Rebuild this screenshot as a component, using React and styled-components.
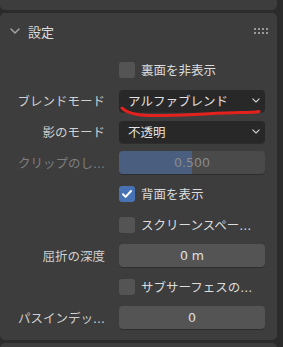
import React from "react";
import styled, { createGlobalStyle } from "styled-components";

const Global = createGlobalStyle`
  html, body {
    margin: 0;
    background: #2b2b2b;
  }
  body {
    font-family: "DejaVu Sans", "Noto Sans CJK JP", sans-serif;
    font-size: 12.5px;
    color: #d4d4d4;
  }
`;

const Page = styled.div`
  width: 283px;
  height: 347px;
  overflow: hidden;
  display: flex;
  flex-direction: column;
  gap: 3px;
`;

const TopPanel = styled.div`
  height: 10px;
  flex: none;
  margin-right: 6px;
  background: #3d3d3d;
  border-radius: 0 0 5px 5px;
  overflow: hidden;
  display: flex;
  align-items: flex-end;
  padding-left: 26px;
  color: #d4d4d4;
  line-height: 1;
`;

const TopTitle = styled.span`
  margin-bottom: 9px;
`;

const Panel = styled.section`
  flex: none;
  margin-right: 6px;
  background: #3d3d3d;
  border-radius: 5px;
  padding: 0 12px 7px 0;
`;

const NextPanel = styled.div`
  height: 20px;
  flex: none;
  margin-right: 6px;
  background: #3d3d3d;
  border-radius: 5px 5px 0 0;
`;

const Header = styled.div`
  height: 36px;
  display: flex;
  align-items: center;
  padding-left: 10px;
  gap: 8px;
  color: #dcdcdc;
`;

const Title = styled.span`
  flex: 1;
  font-size: 13px;
`;

const Grip = styled.div`
  display: grid;
  grid-template-columns: repeat(4, 2px);
  grid-template-rows: repeat(2, 2px);
  gap: 2px 2px;
  margin-right: -3px;
  span {
    background: #9a9a9a;
  }
`;

const Body = styled.div`
  padding-top: 5px;
  display: flex;
  flex-direction: column;
`;

const Row = styled.div`
  height: 31px;
  display: grid;
  grid-template-columns: 105px 1fr;
  column-gap: 14px;
  align-items: center;
`;

const Label = styled.span`
  text-align: right;
  white-space: nowrap;
  color: ${(p) => (p.$dim ? "#7e7e7e" : "#d0d0d0")};
`;

const Control = styled.div`
  position: relative;
  grid-column: 2;
`;

const Select = styled.div`
  height: 22px;
  background: #282828;
  border-radius: 4px;
  display: flex;
  align-items: center;
  justify-content: space-between;
  padding: 0 5px 0 9px;
  color: #e2e2e2;
  box-shadow: 0 1px 0 rgba(0, 0, 0, 0.25);
`;

const Field = styled.div`
  height: 23px;
  background: ${(p) => (p.$dim ? "#4a4a4a" : "#545454")};
  border-radius: 4px;
  display: flex;
  align-items: center;
  justify-content: center;
  color: ${(p) => (p.$dim ? "#8a8a8a" : "#e0e0e0")};
  position: relative;
  overflow: hidden;
  box-shadow: 0 1px 0 rgba(0, 0, 0, 0.25);
`;

const Fill = styled.div`
  position: absolute;
  left: 0;
  top: 0;
  bottom: 0;
  background: #4a5f80;
`;

const Value = styled.span`
  position: relative;
`;

const Check = styled.label`
  display: flex;
  align-items: center;
  gap: 6px;
  color: #dcdcdc;
  white-space: nowrap;
`;

const Box = styled.span`
  width: 16px;
  height: 16px;
  border-radius: 3px;
  background: ${(p) => (p.$on ? "#4772b3" : "#545454")};
  display: flex;
  align-items: center;
  justify-content: center;
  flex: none;
`;

const Mark = styled.svg`
  position: absolute;
  left: 1px;
  top: 15px;
  pointer-events: none;
`;

const Chevron = ({ size = 8, color = "#cfcfcf" }) => (
  <svg width={size} height={size * 0.6} viewBox="0 0 10 6">
    <path d="M1 1l4 4 4-4" fill="none" stroke={color} strokeWidth="1.4" strokeLinecap="round" strokeLinejoin="round" />
  </svg>
);

const CheckRow = ({ on, children }) => (
  <Row>
    <Control>
      <Check>
        <Box $on={on}>
          {on && (
            <svg width="12" height="12" viewBox="0 0 12 12">
              <path d="M2 6.3l2.6 2.6L10 3" fill="none" stroke="#fff" strokeWidth="2" strokeLinecap="round" strokeLinejoin="round" />
            </svg>
          )}
        </Box>
        {children}
      </Check>
    </Control>
  </Row>
);

export default function App() {
  return (
    <Page>
      <Global />
      <TopPanel>
        <TopTitle>ビューポート表示</TopTitle>
      </TopPanel>
      <Panel>
        <Header>
          <Chevron size={10} color="#a8a8a8" />
          <Title>設定</Title>
          <Grip>
            {Array.from({ length: 8 }).map((_, i) => (
              <span key={i} />
            ))}
          </Grip>
        </Header>
        <Body>
          <CheckRow>裏面を非表示</CheckRow>
          <Row>
            <Label>ブレンドモード</Label>
            <Control>
              <Select>
                アルファブレンド
                <Chevron />
              </Select>
              <Mark width="142" height="16" viewBox="0 0 142 16">
                <path
                  d="M2 3 C 6 7, 14 10, 28 10.5 C 60 11, 92 8, 120 7.5 C 128 7.5, 134 7.5, 139 6.5"
                  fill="none"
                  stroke="#e3211d"
                  strokeWidth="3"
                  strokeLinecap="round"
                />
              </Mark>
            </Control>
          </Row>
          <Row>
            <Label>影のモード</Label>
            <Control>
              <Select>
                不透明
                <Chevron />
              </Select>
            </Control>
          </Row>
          <Row>
            <Label $dim>クリップのし...</Label>
            <Control>
              <Field $dim>
                <Fill style={{ width: "50%" }} />
                <Value>0.500</Value>
              </Field>
            </Control>
          </Row>
          <CheckRow on>背面を表示</CheckRow>
          <CheckRow>スクリーンスペー...</CheckRow>
          <Row>
            <Label>屈折の深度</Label>
            <Control>
              <Field>0 m</Field>
            </Control>
          </Row>
          <CheckRow>サブサーフェスの...</CheckRow>
          <Row>
            <Label>パスインデッ...</Label>
            <Control>
              <Field>0</Field>
            </Control>
          </Row>
        </Body>
      </Panel>
      <NextPanel />
    </Page>
  );
}
